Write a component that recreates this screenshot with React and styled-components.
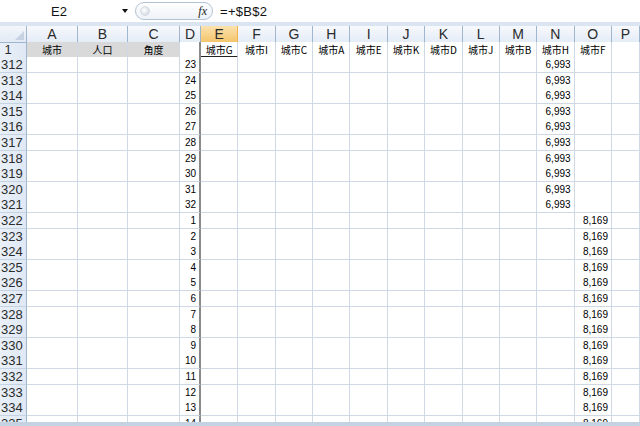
import React from "react";
import styled, { createGlobalStyle } from "styled-components";

const GlobalStyle = createGlobalStyle`
  html, body { margin: 0; padding: 0; background: #fff; overflow: hidden; }
  body { font-family: "Liberation Sans", Arial, sans-serif; }
`;

const COLS = "27px 51px 50px 52px 21px repeat(11, 37.36px) 1fr";
const letters = ["A", "B", "C", "D", "E", "F", "G", "H", "I", "J", "K", "L", "M", "N", "O", "P"];
const row1 = ["城市", "人口", "角度", "", "城市G", "城市I", "城市C", "城市A", "城市E", "城市K", "城市D", "城市J", "城市B", "城市H", "城市F", ""];
const heights = [16, 15, 16, 15, 16];

const rows = [];
for (let i = 0; i < 24; i++) {
  rows.push({
    num: 312 + i,
    d: i < 10 ? 23 + i : i - 9,
    n: i < 10 ? "6,993" : "",
    o: i >= 10 ? "8,169" : "",
    h: heights[i % 5],
  });
}

const Page = styled.div`
  width: 640px;
  height: 426px;
  overflow: hidden;
  display: flex;
  flex-direction: column;
`;

const FormulaBar = styled.div`
  height: 22px;
  flex: none;
  display: flex;
  align-items: center;
  background: #fff;
  border-bottom: 4px solid #dbe5f1;
  font-size: 13px;
  color: #111;
`;

const NameBox = styled.div`
  width: 118px;
  text-align: center;
`;

const DropArrow = styled.div`
  width: 0;
  height: 0;
  margin-left: 4px;
  border-left: 3.5px solid transparent;
  border-right: 3.5px solid transparent;
  border-top: 4px solid #111;
`;

const Pill = styled.div`
  margin-left: 7px;
  width: 78px;
  height: 18px;
  border: 1px solid #b3c2d4;
  border-radius: 10px;
  background: linear-gradient(#ffffff, #eef2f7);
  display: flex;
  align-items: center;
  justify-content: space-between;
  padding: 0 5px 0 4px;
  box-sizing: border-box;
`;

const Knob = styled.div`
  width: 8px;
  height: 8px;
  border-radius: 50%;
  background: radial-gradient(circle at 40% 40%, #fff, #c9d0d8);
  border: 1px solid #d5dbe2;
`;

const Fx = styled.span`
  font-family: "Liberation Serif", serif;
  font-style: italic;
  font-size: 12px;
  color: #222;
`;

const Formula = styled.div`
  margin-left: 7px;
  letter-spacing: 0.3px;
`;

const Sheet = styled.div`
  flex: 1;
  display: flex;
  flex-direction: column;
  overflow: hidden;
  border-bottom: 4px solid #c5d2e2;
`;

const Row = styled.div`
  display: grid;
  grid-template-columns: ${COLS};
  height: ${(p) => p.$h}px;
  flex: none;
`;

const Corner = styled.div`
  background: linear-gradient(#f3f6fb, #e2eaf5);
  border-right: 1px solid #9eb6ce;
  border-bottom: 1px solid #9eb6ce;
  position: relative;
  &::after {
    content: "";
    position: absolute;
    right: 2px;
    bottom: 2px;
    border-left: 9px solid transparent;
    border-bottom: 9px solid #c7d3e2;
  }
`;

const ColHead = styled.div`
  background: ${(p) =>
    p.$sel ? "linear-gradient(#fbe2ae, #f4c56c)" : "linear-gradient(#f7f9fc, #e4ecf7)"};
  border-right: 1px solid ${(p) => (p.$sel ? "#f2b54f" : "#9eb6ce")};
  border-bottom: 1px solid #9eb6ce;
  display: flex;
  align-items: center;
  justify-content: center;
  font-size: 14px;
  color: #2b2b2b;
  box-sizing: border-box;
`;

const RowHead = styled.div`
  background: linear-gradient(90deg, #e9f0f9, #dfe8f4);
  border-right: 1px solid #9eb6ce;
  border-bottom: 1px solid #c5d3e3;
  display: flex;
  align-items: center;
  padding-left: 1px;
  font-size: 13px;
  color: #2b2b2b;
  box-sizing: border-box;
`;

const Cell = styled.div`
  border-right: ${(p) => (p.$freeze ? "2px solid #8a8a8a" : "1px solid #d0d7e5")};
  border-bottom: ${(p) => (p.$under ? "2px solid #222" : "1px solid #d0d7e5")};
  background: ${(p) => (p.$fill ? "#d9d9d9" : "#fff")};
  display: flex;
  align-items: center;
  justify-content: ${(p) => (p.$center ? "center" : "flex-end")};
  padding: 0 3px 0 3px;
  font-family: "Liberation Sans", "Noto Sans CJK SC", sans-serif;
  font-size: 10px;
  color: #000;
  box-sizing: border-box;
  white-space: nowrap;
  overflow: hidden;
`;

const CjkText = styled.span`
  font-family: "Noto Sans CJK SC", sans-serif;
  font-size: 10px;
`;

export default function App() {
  return (
    <Page>
      <GlobalStyle />
      <FormulaBar>
        <NameBox>E2</NameBox>
        <DropArrow />
        <Pill>
          <Knob />
          <Fx>fx</Fx>
        </Pill>
        <Formula>=+$B$2</Formula>
      </FormulaBar>
      <Sheet>
        <Row $h={16}>
          <Corner />
          {letters.map((l) => (
            <ColHead key={l} $sel={l === "E"}>
              {l}
            </ColHead>
          ))}
        </Row>
        <Row $h={15}>
          <RowHead>&nbsp;1</RowHead>
          {row1.map((t, i) => (
            <Cell key={i} $center $fill={i < 3} $freeze={i === 3} $under={i === 4}>
              <CjkText>{t}</CjkText>
            </Cell>
          ))}
        </Row>
        {rows.map((r) => (
          <Row key={r.num} $h={r.h}>
            <RowHead>{r.num}</RowHead>
            {letters.map((l, i) => (
              <Cell key={l} $freeze={i === 3}>
                {l === "D" ? r.d : l === "N" ? r.n : l === "O" ? r.o : ""}
              </Cell>
            ))}
          </Row>
        ))}
      </Sheet>
    </Page>
  );
}
